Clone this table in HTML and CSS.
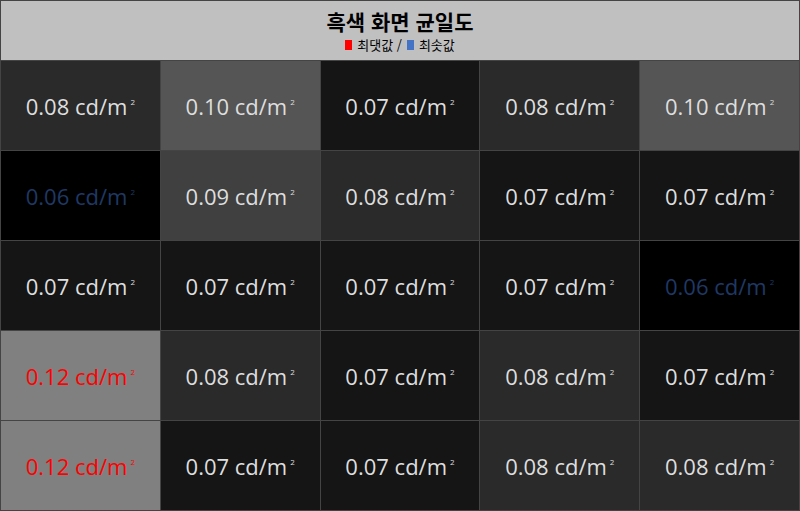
FILE: index.html
```html
<!DOCTYPE html>
<html lang="ko">
<head>
<meta charset="utf-8">
<link rel="stylesheet" href="styles.css">
</head>
<body>
<div class="board">
  <div class="header">
    <div class="title">흑색 화면 균일도</div>
    <div class="legend"><span class="sq sq-red"></span>최댓값 / <span class="sq sq-blue"></span>최솟값</div>
  </div>
  <div class="cell l08">0.08 cd/m<sup>2</sup></div>
  <div class="cell l10">0.10 cd/m<sup>2</sup></div>
  <div class="cell l07">0.07 cd/m<sup>2</sup></div>
  <div class="cell l08">0.08 cd/m<sup>2</sup></div>
  <div class="cell l10">0.10 cd/m<sup>2</sup></div>

  <div class="cell l06 min">0.06 cd/m<sup>2</sup></div>
  <div class="cell l09">0.09 cd/m<sup>2</sup></div>
  <div class="cell l08">0.08 cd/m<sup>2</sup></div>
  <div class="cell l07">0.07 cd/m<sup>2</sup></div>
  <div class="cell l07">0.07 cd/m<sup>2</sup></div>

  <div class="cell l07">0.07 cd/m<sup>2</sup></div>
  <div class="cell l07">0.07 cd/m<sup>2</sup></div>
  <div class="cell l07">0.07 cd/m<sup>2</sup></div>
  <div class="cell l07">0.07 cd/m<sup>2</sup></div>
  <div class="cell l06 min">0.06 cd/m<sup>2</sup></div>

  <div class="cell l12 max">0.12 cd/m<sup>2</sup></div>
  <div class="cell l08">0.08 cd/m<sup>2</sup></div>
  <div class="cell l07">0.07 cd/m<sup>2</sup></div>
  <div class="cell l08">0.08 cd/m<sup>2</sup></div>
  <div class="cell l07">0.07 cd/m<sup>2</sup></div>

  <div class="cell l12 max">0.12 cd/m<sup>2</sup></div>
  <div class="cell l07">0.07 cd/m<sup>2</sup></div>
  <div class="cell l07">0.07 cd/m<sup>2</sup></div>
  <div class="cell l08">0.08 cd/m<sup>2</sup></div>
  <div class="cell l08">0.08 cd/m<sup>2</sup></div>
</div>
</body>
</html>
```
FILE: styles.css
```css
html, body {
  margin: 0;
  padding: 0;
  background: #444;
}
.board {
  box-sizing: border-box;
  width: 800px;
  height: 511px;
  padding: 1px;
  background: #444;
  display: grid;
  grid-template-columns: repeat(5, 1fr);
  grid-template-rows: 59px repeat(5, 89px);
  gap: 1px;
  font-family: "Open Sans", "Noto Sans CJK KR", sans-serif;
}
.header {
  grid-column: 1 / -1;
  background: #c0c0c0;
  display: flex;
  flex-direction: column;
  align-items: center;
  padding-top: 7px;
  color: #000;
  font-family: "Noto Sans CJK KR", sans-serif;
}
.title {
  font-weight: 700;
  font-size: 21px;
  line-height: 26px;
}
.legend {
  font-size: 13px;
  line-height: 18px;
  margin-top: 2px;
  display: flex;
  align-items: center;
}
.sq {
  display: inline-block;
  width: 7px;
  height: 10px;
  margin-right: 5px;
}
.sq-red { background: #ff0000; }
.sq-blue { background: #4472c4; margin-left: 5px; }
.cell {
  display: flex;
  align-items: center;
  justify-content: center;
  color: #dedede;
  font-size: 22px;
  font-weight: 400;
}
.cell sup {
  font-size: 8px;
  position: relative;
  top: -4px;
  vertical-align: top;
  margin-left: 3px;
}
.l06 { background: #000; }
.l07 { background: #151515; }
.l08 { background: #2a2a2a; }
.l09 { background: #404040; }
.l10 { background: #555; }
.l12 { background: #808080; }
.min { color: #1f3864; }
.max { color: #ff0000; }
```
